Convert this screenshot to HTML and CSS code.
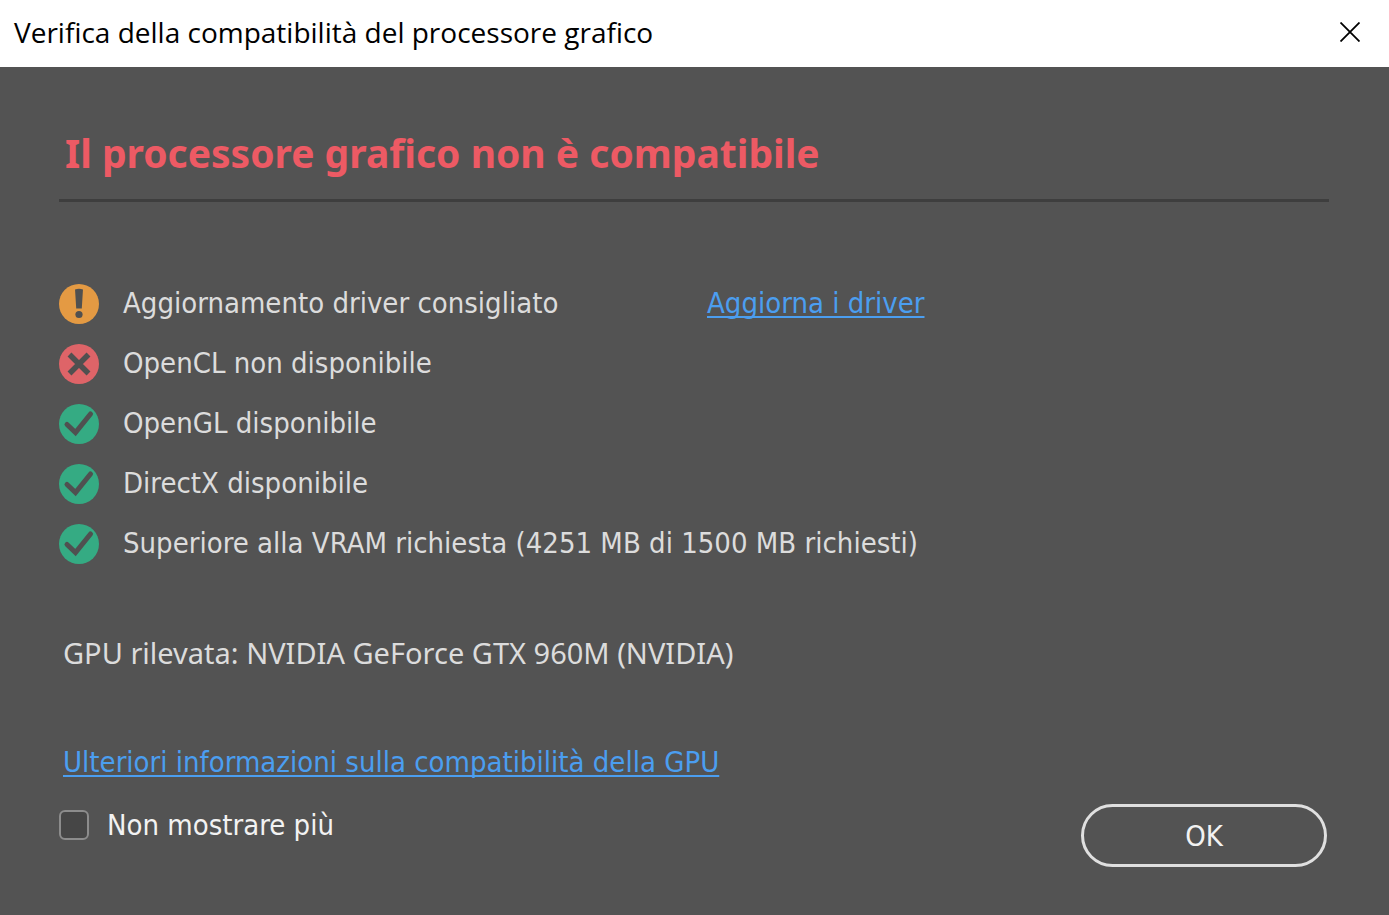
FILE: index.html
```html
<!DOCTYPE html>
<html lang="it">
<head>
<meta charset="utf-8">
<title>Verifica della compatibilità del processore grafico</title>
<link rel="stylesheet" href="styles.css">
</head>
<body>
<svg class="defs" aria-hidden="true">
  <symbol id="check" viewBox="0 0 40 40">
    <circle cx="20" cy="20" r="20" fill="#35ab83"/>
    <path d="M8 20.500 L16.500 28.500 L31.500 10" fill="none" stroke="#505050" stroke-width="5" stroke-linecap="round"/>
  </symbol>
</svg>
<div class="dialog" role="dialog" aria-labelledby="title">
  <header class="titlebar">
    <h1 class="title" id="title">Verifica della compatibilità del processore grafico</h1>
    <button class="close" type="button" aria-label="Chiudi">
      <svg class="close-icon" viewBox="0 0 20 20"><path d="M0.500 0.500 L19.500 19.500 M19.500 0.500 L0.500 19.500" fill="none" stroke="#000" stroke-width="1.800"/></svg>
    </button>
  </header>
  <main class="content">
    <h2 class="heading">Il processore grafico non è compatibile</h2>
    <ul class="checks">
      <li class="check">
        <svg class="status" viewBox="0 0 40 40"><circle cx="20" cy="20" r="20" fill="#e49a43"/><path d="M16 5.500 Q20 4 24 5.500 L22.800 24.500 H17.200 Z" fill="#505050"/><circle cx="20" cy="30.500" r="3.600" fill="#505050"/></svg>
        <span class="label">Aggiornamento driver consigliato</span>
        <a class="link" href="#">Aggiorna i driver</a>
      </li>
      <li class="check">
        <svg class="status" viewBox="0 0 40 40"><circle cx="20" cy="20" r="20" fill="#de6468"/><path d="M10.500 10.500 L29.500 29.500 M29.500 10.500 L10.500 29.500" fill="none" stroke="#505050" stroke-width="5.500"/></svg>
        <span class="label">OpenCL non disponibile</span>
      </li>
      <li class="check">
        <svg class="status"><use href="#check"/></svg>
        <span class="label">OpenGL disponibile</span>
      </li>
      <li class="check">
        <svg class="status"><use href="#check"/></svg>
        <span class="label">DirectX disponibile</span>
      </li>
      <li class="check">
        <svg class="status"><use href="#check"/></svg>
        <span class="label">Superiore alla VRAM richiesta (4251 MB di 1500 MB richiesti)</span>
      </li>
    </ul>
    <p class="gpu">GPU rilevata: NVIDIA GeForce GTX 960M (NVIDIA)</p>
    <p class="more"><a class="link" href="#">Ulteriori informazioni sulla compatibilità della GPU</a></p>
    <footer class="footer">
      <label class="option"><input class="box" type="checkbox">Non mostrare più</label>
      <button class="ok" type="button">OK</button>
    </footer>
  </main>
</div>
</body>
</html>
```
FILE: styles.css
```css
* { box-sizing: border-box; }
body {
  margin: 0;
  background: #535353;
  color: #dcdcdc;
  font: 29px/38px "DejaVu Sans Condensed", "Noto Sans", sans-serif;
}
h1, h2, p, ul { margin: 0; padding: 0; }
.defs { display: none; }
.titlebar {
  display: flex;
  align-items: center;
  justify-content: space-between;
  padding: 0 29px 4px 14px;
  height: 67px;
  background: #fff;
  color: #000;
}
.title { font: 28px/40px "Open Sans", sans-serif; }
.close {
  display: flex;
  padding: 0;
  border: 0;
  background: none;
}
.close-icon { width: 20px; height: 20px; }
.content { padding: 60px 60px 48px 59px; }
.heading {
  padding: 0 6px 20px;
  border-bottom: 3px solid #3e3e3e;
  color: #ed5a64;
  font-family: "Noto Sans", sans-serif;
  font-size: 39px;
  line-height: 52px;
}
.checks {
  display: flex;
  flex-direction: column;
  gap: 20px;
  padding-top: 82px;
  list-style: none;
}
.check {
  display: grid;
  grid-template-columns: 40px 560px 1fr;
  column-gap: 24px;
}
.status { width: 40px; height: 40px; }
.label { white-space: nowrap; }
.link {
  color: #4b9ef0;
  text-decoration-thickness: 2px;
  text-underline-offset: 3px;
  text-decoration-skip-ink: none;
}
.gpu {
  padding: 70px 4px 0;
  font-family: "Noto Sans", sans-serif;
}
.more { padding: 71px 4px 0; }
.footer {
  display: flex;
  align-items: flex-start;
  justify-content: space-between;
  padding-top: 23px;
}
.option {
  display: flex;
  align-items: center;
  gap: 18px;
  padding-top: 2px;
  color: #f2f2f2;
}
.box {
  appearance: none;
  width: 30px;
  height: 30px;
  margin: 0;
  border: 2px solid #8c8c8c;
  border-radius: 6px;
  background: #464646;
}
.ok {
  width: 246px;
  height: 63px;
  margin-right: 2px;
  padding-top: 2px;
  border: 3px solid #e0e0e0;
  border-radius: 32px;
  background: none;
  color: #f2f2f2;
  font: inherit;
}
```
